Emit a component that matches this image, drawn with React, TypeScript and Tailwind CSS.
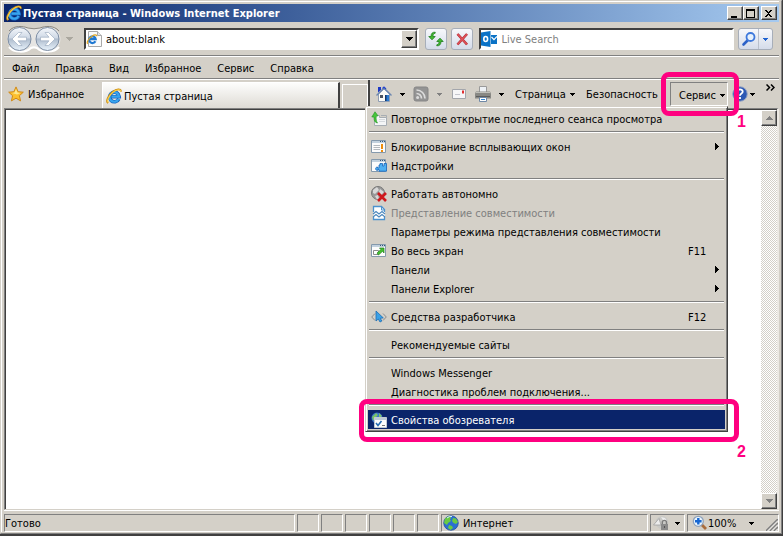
import React from "react";

type IconProps = { className?: string };

function IeIcon({ className = "size-4" }: IconProps) {
  return (
    <svg viewBox="0 0 16 16" className={className} aria-hidden="true">
      <path d="M12.800 10.900A4.800 4.800 0 1 1 13.200 8.700H5.200" fill="none" stroke="#1763bd" strokeWidth="3.600" />
      <path d="M12.600 10.900A4.800 4.800 0 1 1 13 8.600H5.500" fill="none" stroke="#38a5ee" strokeWidth="2.200" />
      <path d="M2.200 15C-.6 13.400 2.200 7.600 6.600 4 10.600.8 15 .2 14.900 3.600" fill="none" stroke="#c98a12" strokeWidth="1.800" />
      <path d="M2.400 14.600C.2 13.200 2.800 7.800 6.800 4.400 10.600 1.300 14.500.8 14.700 3.400" fill="none" stroke="#fbd04a" strokeWidth="1.100" />
    </svg>
  );
}

function PageIcon() {
  return (
    <svg viewBox="0 0 16 16" className="size-4 shrink-0" aria-hidden="true">
      <path d="M2.500.5h9l4 4v11h-13z" fill="#fbfbfb" stroke="#a9a9a9" />
      <path d="M11.500.5v4h4" fill="#e4e4e4" stroke="#a9a9a9" />
      <path d="M9.400 10.200a3.300 3.300 0 1 1 .3-2H4" fill="none" stroke="#1f78d2" strokeWidth="2.200" />
      <path d="M1.800 12.800C0 11.500 3 7 6 5.200c2.500-1.800 4.800-1.700 4.700 0" fill="none" stroke="#e3a51d" strokeWidth="1.200" />
    </svg>
  );
}

function NavArrows() {
  return (
    <svg viewBox="0 0 56 28" className="h-7 w-14" aria-hidden="true">
      <defs>
        <linearGradient id="orb" x1="0" y1="0" x2="0" y2="1">
          <stop offset="0" stopColor="#f4f7fb" />
          <stop offset=".45" stopColor="#cfd9e6" />
          <stop offset=".5" stopColor="#aebccd" />
          <stop offset="1" stopColor="#e9f3fc" />
        </linearGradient>
      </defs>
      <path d="M14 1.500c6 0 8 2 14 2s8-2 14-2a12.500 12.500 0 0 1 0 25c-6 0-8-3-14-3s-8 3-14 3a12.500 12.500 0 0 1 0-25z" fill="#e6e5e3" />
      <path d="M3 6C8 0 17 1 22 3q6 1.500 12 0c5-2 14-3 19 3" fill="none" stroke="#8b8882" />
      <path d="M3 22c5 6 17 6 22 1 2-1 4-1 6 0 5 5 17 5 22-1" fill="none" stroke="#fff" strokeWidth="2" />
      <circle cx="13.500" cy="14" r="11.500" fill="url(#orb)" stroke="#7d8da3" />
      <circle cx="41.500" cy="14" r="11.500" fill="url(#orb)" stroke="#7d8da3" />
      <path d="M6 14l6.500-6.500H16L12 12.200h8.500v3.600H12l4 4.700h-3.500z" fill="#fff" stroke="#94a5ba" strokeWidth=".6" />
      <path d="M49 14l-6.500-6.500H39l4 4.700h-8.500v3.600H43l-4 4.700h3.500z" fill="#fff" stroke="#94a5ba" strokeWidth=".6" />
    </svg>
  );
}

function StarIcon() {
  return (
    <svg viewBox="0 0 16 16" className="size-4" aria-hidden="true">
      <path d="M8 .9l2.100 4.800 5.200.5-3.900 3.500 1.200 5.200L8 12.200l-4.600 2.700 1.200-5.200L.7 6.200l5.200-.5z" fill="#fdc02f" stroke="#d08a1a" strokeLinejoin="round" />
      <path d="M8 3l1.400 3.500 3 .4-3.400 1.500-5-1.500 2.600-.4z" fill="#ffe88f" />
    </svg>
  );
}

function RefreshIcon() {
  return (
    <svg viewBox="0 0 16 16" className="size-4" aria-hidden="true">
      <path d="M7.200 2.200C5.400 2.400 5 3.600 5 5.500h2.200L4 8.800.8 5.500H3C3 2.500 4.500 1 7.200 1.200z" fill="#43b830" stroke="#1d7c1d" strokeWidth=".8" />
      <path d="M8.800 13.800c1.800-.2 2.200-1.400 2.200-3.300H8.800L12 7.200l3.200 3.300H13c0 3-1.500 4.500-4.200 4.300z" fill="#43b830" stroke="#1d7c1d" strokeWidth=".8" />
    </svg>
  );
}

function StopIcon() {
  return (
    <svg viewBox="0 0 16 16" className="size-4" aria-hidden="true">
      <path d="M3.500 3l9.500 10.500M13 3L3.500 13.500" stroke="#a92d35" strokeWidth="2.600" />
      <path d="M3.500 3l9.500 10.500M13 3L3.500 13.500" stroke="#df5058" strokeWidth="1.600" />
    </svg>
  );
}

function OutlookIcon() {
  return (
    <svg viewBox="0 0 16 16" className="size-4 shrink-0" aria-hidden="true">
      <path d="M10 4h6v9h-6z" fill="#0a72c6" />
      <path d="M10.500 6l2.500 2.600L16 5.500" fill="none" stroke="#fff" strokeWidth="1.200" />
      <path d="M0 1.500L9.500 0v16L0 14.500z" fill="#0a72c6" />
      <ellipse cx="4.700" cy="8" rx="1.900" ry="2.500" fill="none" stroke="#fff" strokeWidth="1.600" />
    </svg>
  );
}

function MagnifierIcon() {
  return (
    <svg viewBox="0 0 16 16" className="size-4" aria-hidden="true">
      <path d="M6.500 9.500L2.500 13.500" stroke="#2c62c8" strokeWidth="2.600" strokeLinecap="round" />
      <circle cx="9.500" cy="6" r="4" fill="#e6f1fd" stroke="#3d78dc" strokeWidth="1.800" />
    </svg>
  );
}

function HomeIcon() {
  return (
    <svg viewBox="0 0 16 16" className="size-4" aria-hidden="true">
      <path d="M2.500 8L8 3l5.500 5v7.500h-11z" fill="#fbfbf7" stroke="#8f9db3" />
      <path d="M2 1h3v3L2 6.500z" fill="#1c38c4" />
      <path d="M.5 9.500L8 2l7.500 7.500" fill="none" stroke="#6c87b0" strokeWidth="1.400" />
      <path d="M6.500 2.500L8 1l2 2" fill="none" stroke="#2646cc" strokeWidth="1.200" />
      <path d="M4 9h3v3H4z" fill="#4c5360" />
      <path d="M9 9h4v6H9z" fill="#2a7ad0" />
      <path d="M9 9h1.500v6H9z" fill="#12376c" />
    </svg>
  );
}

function FeedIcon() {
  return (
    <svg viewBox="0 0 16 16" className="size-4" aria-hidden="true">
      <rect x="1" y="1" width="14" height="14" rx="2" fill="#949494" stroke="#868686" />
      <circle cx="4.600" cy="11.600" r="1.500" fill="#dcdcdc" />
      <path d="M3.500 7.500a5 5 0 0 1 5 5M3.500 4a8.500 8.500 0 0 1 8.500 8.500" fill="none" stroke="#dcdcdc" strokeWidth="1.700" />
    </svg>
  );
}

function MailIcon() {
  return (
    <svg viewBox="0 0 16 16" className="size-4" aria-hidden="true">
      <path d="M1.500 3.500h13v9h-13z" fill="#f6f6f8" stroke="#a3a6ac" />
      <path d="M11 4.500h2v3h-2z" fill="#e02f2f" />
      <path d="M4 8.500h5" stroke="#c4c6ce" />
    </svg>
  );
}

function PrinterIcon() {
  return (
    <svg viewBox="0 0 16 16" className="size-4" aria-hidden="true">
      <path d="M4.500.5h7v6h-7z" fill="#eef2f6" stroke="#9a9a9a" />
      <path d="M1 5.500h14l1 2v5H0v-5z" fill="#888884" />
      <path d="M1 6h14v1H1z" fill="#bfbfb9" />
      <path d="M1 10h14v1H1z" fill="#5d5d5d" />
      <path d="M4.500 11.500h7v4h-7z" fill="#fff" stroke="#7089a6" />
      <path d="M6 13.500h4" stroke="#338ad8" />
    </svg>
  );
}

function HelpIcon() {
  return (
    <svg viewBox="0 0 16 16" className="size-4" aria-hidden="true">
      <circle cx="8" cy="8" r="7.300" fill="#2d59b4" stroke="#9aa7c4" />
      <path d="M5.300 6c0-3.500 5.500-3.300 5.400-.3C10.700 7.500 8 7.600 8 9.700M8 11v2" fill="none" stroke="#fff" strokeWidth="1.800" />
    </svg>
  );
}

function ReopenIcon() {
  return (
    <svg viewBox="0 0 16 16" className="size-4" aria-hidden="true">
      <path d="M3.500 4.500h5v2h7v8h-12z" fill="#f4f5f6" stroke="#a7adb3" />
      <path d="M10 4.500h5.500v2" fill="none" stroke="#a7adb3" />
      <path d="M8 8.500h6M8 10.500h6" stroke="#d5d9dd" />
      <path d="M6.500 12C3.500 11.500 3 9.500 3 6H.8L4 .8 7 4.800l-1.800.5c-.2 3 0 5 1.300 6.700z" fill="#47c53b" stroke="#239424" strokeWidth=".6" />
    </svg>
  );
}

function WindowFrame() {
  return (
    <>
      <path d="M.5 1.500h14v12H.5z" fill="#fcfcfc" stroke="#8499ac" />
      <path d="M1 2h13v2H1z" fill="#c2d1de" />
      <path d="M9 2.500h1m1 0h1m1 0h1" stroke="#33577b" />
    </>
  );
}

function PopupIcon() {
  return (
    <svg viewBox="0 0 16 16" className="size-4" aria-hidden="true">
      <WindowFrame />
      <path d="M2.500 6.500H9M2.500 8.500H9M2.500 10.500H9" stroke="#b4b9be" />
      <path d="M11 5v5M11 11v2" stroke="#ee8d0c" strokeWidth="2" />
    </svg>
  );
}

function AddonIcon() {
  return (
    <svg viewBox="0 0 16 16" className="size-4" aria-hidden="true">
      <WindowFrame />
      <path d="M8 7h1V5.500h2.500V8h1.500V5.500h2.500v7.700H8v-1.700H6.500v1C4 12.500 4 9 6.500 9v1H8z" fill="#4fb0f2" stroke="#1764ba" strokeWidth=".8" />
    </svg>
  );
}

function OfflineIcon() {
  return (
    <svg viewBox="0 0 16 16" className="size-4" aria-hidden="true">
      <circle cx="7" cy="7" r="6.500" fill="#999" stroke="#777" />
      <path d="M2 4l4-3 2 3-4 4-2-1zM9 3l4 3-3 3-2-3zM4 10l3-1 1 4-2 .5z" fill="#d8d8d8" />
      <path d="M7 7l8 8M15 7l-8 8" stroke="#cf171c" strokeWidth="2.600" />
    </svg>
  );
}

function CompatIcon() {
  return (
    <svg viewBox="0 0 16 16" className="size-4" aria-hidden="true">
      <path d="M2.500 1h8L14 4.500V15H2.500z" fill="#fff" />
      <path d="M2.500 7V1.500h8l3 3V7M2.500 12v2.500h11V12" fill="none" stroke="#4c92ce" strokeWidth="1.300" />
      <path d="M10.500 1v4h3" fill="none" stroke="#4c92ce" />
      <path d="M2 9l3-2.500L8 9l3-2.500L14 9M2 12l3-2.500L8 12l3-2.500 3 2.500" fill="none" stroke="#4d88bc" strokeWidth="1.200" />
    </svg>
  );
}

function FullscreenIcon() {
  return (
    <svg viewBox="0 0 16 16" className="size-4" aria-hidden="true">
      <WindowFrame />
      <path d="M2.500 7.500h5v4h-5z" fill="#fff" stroke="#8d8d8d" />
      <path d="M6 10l4-3.500L8.500 5H13v5l-1.500-1.700L7.500 12z" fill="#45c32f" stroke="#227d20" strokeWidth=".7" />
    </svg>
  );
}

function DevToolsIcon() {
  return (
    <svg viewBox="0 0 16 16" className="size-4" aria-hidden="true">
      <path d="M4 4.500L.7 8 4 11.500M12 4.500L15.300 8 12 11.500" fill="none" stroke="#8c8c8c" />
      <path d="M5 2v10l2.300-2 1.700 3 1.800-.9-1.500-2.800 3-.4z" fill="#3ba1e6" stroke="#1c6cb4" strokeWidth=".8" />
    </svg>
  );
}

function OptionsIcon() {
  return (
    <svg viewBox="0 0 16 16" className="size-4" aria-hidden="true">
      <circle cx="6" cy="6" r="5.500" fill="#3d74c8" />
      <path d="M1 5l4-4 2 2-3 3v3l-2-1zM8 1l3 3-3 2z" fill="#79c466" />
      <path d="M3.500 5.500h12v10h-12z" fill="#fcfcfc" stroke="#c2cbd3" />
      <path d="M4 6h11v2H4z" fill="#bccbd8" />
      <path d="M5 11l2 2.500L10.500 9" fill="none" stroke="#246bb2" strokeWidth="1.600" />
      <path d="M11 13.500h3" stroke="#777" />
    </svg>
  );
}

function GlobeIcon() {
  return (
    <svg viewBox="0 0 16 16" className="size-4" aria-hidden="true">
      <circle cx="8" cy="8" r="7.300" fill="#2c6fd0" stroke="#1d4a9a" strokeWidth=".7" />
      <path d="M2 3.500L6 1l2 1.500-1 2L8 6 5 8l-1 2-3-2zM10 3l3 .5L15 7l-2 2-2.500-1L9 6zM6 10l3 1 1 2-2.500 2L5 13z" fill="#69cb43" />
      <path d="M4 3a6 6 0 0 1 5-1.500" fill="none" stroke="#d6f0ff" />
    </svg>
  );
}

function ProtectedIcon() {
  return (
    <svg viewBox="0 0 16 16" className="size-4" aria-hidden="true">
      <circle cx="9" cy="7.500" r="6.500" fill="#c9c9c6" />
      <path d="M.5 10L6 3.500 8 10z" fill="#ececec" stroke="#999" strokeWidth=".7" />
      <path d="M8 2l4 1 2 3-4-1z" fill="#ededed" />
      <path d="M9.300 9V7.500a2 2 0 0 1 4.200 0V9" fill="none" stroke="#7d7d7d" strokeWidth="1.400" />
      <path d="M8 9h7v6H8z" fill="#8a8a8a" />
      <path d="M11 11h1v2h-1z" fill="#555" />
    </svg>
  );
}

function ZoomIcon() {
  return (
    <svg viewBox="0 0 16 16" className="size-4" aria-hidden="true">
      <path d="M9.500 9.500L14 14" stroke="#a96c3d" strokeWidth="2.800" />
      <circle cx="6.300" cy="6.300" r="5" fill="#e9f5ff" stroke="#8fa2bb" strokeWidth="1.300" />
      <path d="M6.300 3v6.600M3 6.300h6.600" stroke="#1767d2" strokeWidth="2.400" />
    </svg>
  );
}

function Caret({ className = "text-black" }: IconProps) {
  return (
    <svg viewBox="0 0 5 3" className={`h-[3px] w-[5px] shrink-0 ${className}`} shapeRendering="crispEdges" aria-hidden="true">
      <path d="M0 0h5v1H4v1H3v1H2V2H1V1H0z" fill="currentColor" />
    </svg>
  );
}

function BigCaret({ className = "" }: IconProps) {
  return (
    <svg viewBox="0 0 7 4" className={`h-1 w-[7px] ${className}`} shapeRendering="crispEdges" aria-hidden="true">
      <path d="M0 0h7v1H6v1H5v1H4v1H3V3H2V2H1V1H0z" fill="currentColor" />
    </svg>
  );
}

const raised =
  "border border-t-white border-l-white border-r-[#404040] border-b-[#404040] bg-[#d4d0c8] shadow-[inset_-1px_-1px_0_#808080]";
const sunkenField = "border-2 border-t-[#404040] border-l-[#404040] border-r-white border-b-white bg-white";
const glassButton = "rounded-[3px] border border-[#a7aeb9] bg-linear-to-b from-[#f7f8fb] to-[#d5dcea]";
const pane = "border border-t-[#808080] border-l-[#808080] border-r-white border-b-white";

function CaptionButton({ label, children }: { label: string; children: React.ReactNode }) {
  return (
    <button aria-label={label} className={`flex h-[14px] w-4 items-center justify-center ${raised}`}>
      <svg viewBox="0 0 10 9" className="h-[9px] w-[10px]" shapeRendering="crispEdges" aria-hidden="true">
        {children}
      </svg>
    </button>
  );
}

function TitleBar() {
  return (
    <header className="flex h-[18px] items-center bg-linear-to-r from-[#0a246a] to-[#a6caf0] pr-0.5 pl-0.5">
      <IeIcon />
      <h1 className="ml-px flex-1 truncate pt-0.5 text-[11px] font-bold text-white">Пустая страница - Windows Internet Explorer</h1>
      <CaptionButton label="Свернуть">
        <path d="M1 7h6v2H1z" />
      </CaptionButton>
      <CaptionButton label="Развернуть">
        <path d="M0 0h9v9H0zM1 2v6h7V2z" fillRule="evenodd" />
      </CaptionButton>
      <span className="w-0.5" />
      <CaptionButton label="Закрыть">
        <path d="M1 1h2v1h1v1h1V2h1V1h2v1H7v1H6v1H5v1h1v1h1v1h1v1H6V7H5V6H4v1H3v1H1V7h1V6h1V5h1V4H3V3H2V2H1z" />
      </CaptionButton>
    </header>
  );
}

function NavBar() {
  return (
    <div className="flex h-[34px] items-center border-b border-[#808080] pt-px">
      <button aria-label="Назад и вперёд" className="ml-0.5 w-14 shrink-0">
        <NavArrows />
      </button>
      <button aria-label="Последние страницы" className="ml-1 w-[7px] text-[#aaa79f]">
        <BigCaret />
      </button>
      <div className={`ml-[11px] flex h-[22px] flex-[336_1_0] items-center ${sunkenField}`}>
        <PageIcon />
        <input aria-label="Адрес" defaultValue="about:blank" className="ml-1 min-w-0 flex-1 pt-0.5 text-[11px] outline-none" />
        <button aria-label="Показать адреса" className={`flex h-[18px] w-4 items-center justify-center ${raised}`}>
          <BigCaret />
        </button>
      </div>
      <button aria-label="Обновить" className={`ml-1.5 flex size-[22px] items-center justify-center ${glassButton}`}>
        <RefreshIcon />
      </button>
      <button aria-label="Остановить" className={`ml-1 flex size-[22px] items-center justify-center ${glassButton}`}>
        <StopIcon />
      </button>
      <div className={`ml-1.5 flex h-[22px] flex-[254_1_0] items-center ${sunkenField}`}>
        <OutlookIcon />
        <input aria-label="Поиск" placeholder="Live Search" className="ml-1 min-w-0 flex-1 pt-0.5 text-[11px] outline-none placeholder:text-[#808080]" />
      </div>
      <div className={`mr-1.5 ml-1 flex h-[22px] w-[35px] ${glassButton}`}>
        <button aria-label="Искать" className="flex w-5 items-center justify-center border-r border-[#b9c0cc]">
          <MagnifierIcon />
        </button>
        <button aria-label="Параметры поиска" className="flex flex-1 items-center justify-center">
          <Caret className="text-[#1f62d0]" />
        </button>
      </div>
    </div>
  );
}

const menus = ["Файл", "Правка", "Вид", "Избранное", "Сервис", "Справка"];

function MenuBar() {
  return (
    <nav className="flex h-[23px] items-center border-t border-b border-t-white border-b-[#808080]">
      {menus.map((name) => (
        <button key={name} className="px-2 pt-0.5">
          {name}
        </button>
      ))}
    </nav>
  );
}

type Entry = { label: string; icon?: React.ReactNode; hint?: string; submenu?: boolean; disabled?: boolean; active?: boolean };

const groups: Entry[][] = [
  [{ label: "Повторное открытие последнего сеанса просмотра", icon: <ReopenIcon /> }],
  [
    { label: "Блокирование всплывающих окон", icon: <PopupIcon />, submenu: true },
    { label: "Надстройки", icon: <AddonIcon /> },
  ],
  [
    { label: "Работать автономно", icon: <OfflineIcon /> },
    { label: "Представление совместимости", icon: <CompatIcon />, disabled: true },
    { label: "Параметры режима представления совместимости" },
    { label: "Во весь экран", icon: <FullscreenIcon />, hint: "F11" },
    { label: "Панели", submenu: true },
    { label: "Панели Explorer", submenu: true },
  ],
  [{ label: "Средства разработчика", icon: <DevToolsIcon />, hint: "F12" }],
  [{ label: "Рекомендуемые сайты" }],
  [{ label: "Windows Messenger" }, { label: "Диагностика проблем подключения..." }],
  [{ label: "Свойства обозревателя", icon: <OptionsIcon />, active: true }],
];

function MenuEntry({ label, icon, hint, submenu, disabled, active }: Entry) {
  return (
    <div className="relative">
      <button
        role="menuitem"
        disabled={disabled}
        className={`flex h-[19px] w-full items-center pl-[3px] text-left whitespace-nowrap ${
          active ? "bg-[#0a246a] text-white" : disabled ? "text-[#808080]" : ""
        }`}
      >
        <span className="w-5 shrink-0">{icon}</span>
        <span className="flex-1 pt-0.5">{label}</span>
        {hint && <span className="w-[37px] pt-0.5">{hint}</span>}
        {submenu && (
          <svg viewBox="0 0 4 7" className="mr-1.5 h-[7px] w-1" shapeRendering="crispEdges" aria-hidden="true">
            <path d="M0 0h1v1h1v1h1v1h1v1H3v1H2v1H1v1H0z" />
          </svg>
        )}
      </button>
      {active && (
        <Callout number="2" className="-top-[11px] -right-[14px] -bottom-[13px] -left-[9px]" numberClassName="leading-[30px]" />
      )}
    </div>
  );
}

type CalloutProps = { number: string; className: string; numberClassName: string };

function Callout({ number, className, numberClassName }: CalloutProps) {
  return (
    <div className={`pointer-events-none absolute z-20 rounded-lg border-[5px] border-[#ff0080] ${className}`}>
      <span
        className={`absolute top-full -right-3 font-['Liberation_Sans',sans-serif] text-base font-bold text-[#ff0080] ${numberClassName}`}
      >
        {number}
      </span>
    </div>
  );
}

function ToolsMenu() {
  return (
    <div
      role="menu"
      className="absolute top-full right-0 z-10 w-[363px] border border-t-[#d4d0c8] border-r-[#404040] border-b-[#404040] border-l-[#d4d0c8] bg-[#d4d0c8] p-0.5 shadow-[inset_1px_1px_0_#fff,inset_-1px_-1px_0_#808080]"
    >
      {groups.map((entries, index) => (
        <React.Fragment key={index}>
          {index > 0 && <hr className="mx-px mt-[3px] mb-1 h-0.5 border-t border-b border-t-[#808080] border-b-white" />}
          {entries.map((entry) => (
            <MenuEntry key={entry.label} {...entry} />
          ))}
        </React.Fragment>
      ))}
    </div>
  );
}

function CommandBar() {
  return (
    <div className="flex h-full items-start border-l-2 border-[#404040] pt-0.5 pl-1.5">
      <button aria-label="Домой" className="flex h-6 w-[37px] items-center gap-2">
        <HomeIcon />
        <Caret />
      </button>
      <button aria-label="Веб-каналы" className="flex h-6 w-[38px] items-center gap-2">
        <FeedIcon />
        <Caret className="text-[#808080]" />
      </button>
      <button aria-label="Почта" className="flex h-6 w-6 items-center">
        <MailIcon />
      </button>
      <button aria-label="Печать" className="flex h-6 w-10 items-center gap-2">
        <PrinterIcon />
        <Caret />
      </button>
      <button className="flex h-6 w-[71px] items-center gap-1">
        <span className="pt-0.5">Страница</span>
        <Caret />
      </button>
      <button className="flex h-6 w-[84px] items-center">
        <span className="pt-0.5">Безопасность</span>
      </button>
      <div className="relative">
        <button className={`flex h-6 w-[58px] items-center justify-between pt-0.5 pr-0.5 pl-2 ${pane}`} aria-expanded="true">
          <span className="pt-0.5">Сервис</span>
          <Caret />
        </button>
        <ToolsMenu />
        <Callout number="1" className="-top-[10px] -right-[11px] -bottom-[10px] -left-[9px]" numberClassName="leading-[22px]" />
      </div>
      <button aria-label="Справка" className="ml-1 flex h-6 w-[30px] items-center gap-0.5">
        <HelpIcon />
        <Caret />
      </button>
      <button aria-label="Другие команды" className="mt-0.5 mr-1 ml-1">
        <svg viewBox="0 0 9 7" className="h-[7px] w-[9px]" aria-hidden="true">
          <path d="M.5.5l3 3-3 3M5 .5l3 3-3 3" fill="none" stroke="#000" strokeWidth="1.500" />
        </svg>
      </button>
    </div>
  );
}

function TabRow() {
  return (
    <div className="flex h-[29px] border-t border-white">
      <button className="flex h-7 w-[98px] shrink-0 items-center gap-1 pl-1">
        <StarIcon />
        <span className="pt-0.5">Избранное</span>
      </button>
      <div className="flex min-w-0 flex-1 items-end">
        <button className="flex h-[26px] min-w-0 flex-1 items-center gap-0.5 border-t border-r-2 border-l border-t-white border-r-[#404040] border-l-white bg-linear-to-b from-[#fdfdfc] to-[#dedbd5] pl-[3px] whitespace-nowrap">
          <IeIcon />
          <span className="pt-0.5">Пустая страница</span>
        </button>
        <button aria-label="Создать вкладку" className="ml-0.5 h-6 w-[26px] border-t border-r border-l border-white" />
      </div>
      <CommandBar />
    </div>
  );
}

function ScrollButton({ up }: { up?: boolean }) {
  return (
    <button aria-label={up ? "Прокрутить вверх" : "Прокрутить вниз"} className={`flex size-4 items-center justify-center text-[#808080] ${raised}`}>
      <BigCaret className={up ? "rotate-180" : ""} />
    </button>
  );
}

function PageArea() {
  return (
    <main className="flex min-h-0 flex-1 border-t border-r-2 border-b border-l border-t-[#808080] border-r-[#ece9e4] border-b-[#d4d0c8] border-l-[#808080] bg-white">
      <div className="flex flex-1 border-t border-l border-[#404040]">
        <div className="flex-1" />
        <div className="flex w-4 flex-col justify-between bg-[repeating-conic-gradient(#d4d0c8_0_25%,#ffffff_0_50%)] bg-[length:2px_2px]">
          <ScrollButton up />
          <ScrollButton />
        </div>
      </div>
    </main>
  );
}

function StatusBar() {
  return (
    <footer className="flex h-[22px] gap-0.5 border-t border-white pt-[3px]">
      <div className={`flex flex-[293_1_0] items-center ${pane}`}>
        <span className="pt-0.5">Готово</span>
      </div>
      {[0, 1, 2, 3, 4, 5].map((slot) => (
        <div key={slot} className={`w-[22px] ${pane}`} />
      ))}
      <div className={`flex flex-[207_1_0] items-center gap-1 pl-px ${pane}`}>
        <GlobeIcon />
        <span className="pt-0.5">Интернет</span>
      </div>
      <button aria-label="Защищённый режим" className={`flex w-[35px] items-center gap-1.5 pl-0.5 ${pane}`}>
        <ProtectedIcon />
        <Caret />
      </button>
      <div className={`flex w-[92px] items-center pl-1 ${pane}`}>
        <button className="flex flex-1 items-center">
          <ZoomIcon />
          <span className="flex-1 pt-0.5 text-left">100%</span>
          <Caret />
        </button>
        <svg viewBox="0 0 12 12" className="ml-3 size-3 self-end" aria-hidden="true">
          <path d="M0 12L12 0M4 12l8-8M8 12l4-4" stroke="#808080" strokeWidth="1.600" />
          <path d="M1.500 12L12 1.500M5.500 12L12 5.500M9.500 12L12 9.500" stroke="#fff" strokeWidth=".8" />
        </svg>
      </div>
    </footer>
  );
}

export default function App() {
  return (
    <div className="h-screen overflow-hidden border-r border-b-2 border-[#404040] bg-[#d4d0c8] font-['DejaVu_Sans_Condensed','DejaVu_Sans',sans-serif] text-[11px] leading-4 text-black">
      <div className="flex h-full flex-col border-t border-r border-b border-l border-t-[#d4d0c8] border-r-[#808080] border-b-[#808080] border-l-[#d4d0c8] pr-0.5 pb-px">
        <div className="flex min-h-0 flex-1 flex-col border-t border-l border-white pt-0.5 pl-0.5">
          <TitleBar />
          <NavBar />
          <MenuBar />
          <TabRow />
          <PageArea />
          <StatusBar />
        </div>
      </div>
    </div>
  );
}
